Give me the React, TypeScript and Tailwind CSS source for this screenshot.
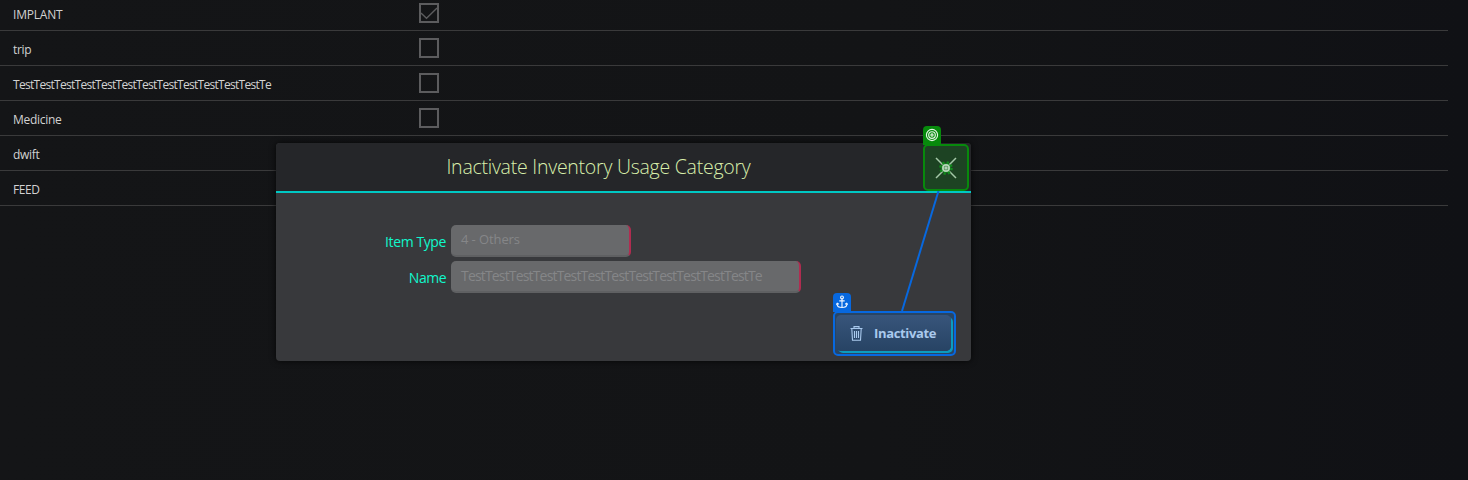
import React from "react";

const rows = [
  { name: "IMPLANT", box: true, checked: true, ls: "tracking-[-0.2px]" },
  { name: "trip", box: true, checked: false, ls: "tracking-[-0.3px]" },
  { name: "TestTestTestTestTestTestTestTestTestTestTestTestTe", box: true, checked: false, ls: "tracking-[-0.71px]" },
  { name: "Medicine", box: true, checked: false, ls: "tracking-[-0.3px]" },
  { name: "dwift", box: false, checked: false, ls: "tracking-[-0.3px]" },
  { name: "FEED", box: false, checked: false, ls: "tracking-[-0.4px]" },
];

function Check({ checked }: { checked: boolean }) {
  return (
    <span className="mt-[-1px] block size-5 border-2 border-[#5c5c5e]">
      {checked && (
        <svg viewBox="0 0 16 16" className="size-4" fill="none" stroke="#5c5c5e" strokeWidth="1.3">
          <path d="M0 8 L5.5 13.3 L16 3" />
        </svg>
      )}
    </span>
  );
}

function Row({ row }: { row: (typeof rows)[number] }) {
  return (
    <div className="flex h-[35px] w-[1448px] shrink-0 items-center border-b border-[#3a3a3b] pl-[13px]">
      <span className={`w-[406px] pt-[4px] text-[12px] leading-[18px] text-[#d2d2d2] ${row.ls}`}>
        <span>{row.name}</span>
      </span>
      {row.box && <Check checked={row.checked} />}
    </div>
  );
}

export default function App() {
  return (
    <div className="relative flex h-[480px] w-full flex-col overflow-hidden bg-[linear-gradient(90deg,#141517,#131416_60%,#101115)] font-['Open_Sans','Noto_Sans',sans-serif]">
      <div className="mt-[-4px] flex flex-col">
        {rows.map((r) => (
          <Row key={r.name} row={r} />
        ))}
      </div>

      <section className="absolute left-[276px] top-[143px] flex h-[218px] w-[695px] flex-col rounded-[4px] bg-[#38393c] shadow-[0_0_6px_rgba(0,0,0,0.75)]">
        <header className="flex h-[50px] justify-center rounded-t-[4px] border-b-2 border-[#00c8c4] bg-[#252629] pr-[50px]">
          <h1 className="whitespace-nowrap text-[19.5px] font-light leading-[48px] tracking-[-0.25px] text-[#d9efab]">Inactivate Inventory Usage Category</h1>
        </header>
        <div className="flex flex-col gap-1 pt-8">
          <label className="flex h-8 items-center gap-[5px]">
            <span className="w-[170px] pt-px text-right text-[14px] tracking-[-0.4px] text-[#10f8cc]">Item Type</span>
            <span className="h-8 w-[180px] rounded-[5px] border-b-2 border-r-2 border-b-[#5f6062] border-r-[#b02c50] bg-[#68696b] pl-[10px] text-[13px] leading-[29px] tracking-[-0.1px] text-[#858688]">4 - Others</span>
          </label>
          <label className="flex h-8 items-center gap-[5px]">
            <span className="w-[170px] pt-px text-right text-[14px] tracking-[-0.5px] text-[#10f8cc]">Name</span>
            <span className="h-8 w-[350px] rounded-[5px] border-b-2 border-r-2 border-b-[#5f6062] border-r-[#b02c50] bg-[#68696b] pl-[10px] text-[14px] leading-[30px] tracking-[-0.83px] text-[#858688]">TestTestTestTestTestTestTestTestTestTestTestTestTe</span>
          </label>
        </div>
      </section>

      <svg className="absolute left-[890px] top-[188px]" width="60" height="126" fill="none">
        <path d="M48.5 3 L12 123" stroke="#0768df" strokeWidth="2" />
      </svg>

      <div className="absolute left-[923px] top-[144px] flex h-[47px] w-[46px] items-center justify-center rounded-[5px] border-2 border-[#078a0c] bg-[#1d4323]">
        <svg width="22" height="22" viewBox="0 0 22 22" fill="none">
          <path d="M1 1 L21 21 M21 1 L1 21" stroke="#a5c8a8" strokeWidth="1.5" />
          <circle cx="11" cy="11" r="5.5" stroke="#118b1c" strokeWidth="2.6" strokeDasharray="2.2 2.12" />
          <circle cx="11" cy="11" r="4.8" fill="#168720" />
          <circle cx="11" cy="11" r="3.1" fill="#3c8445" stroke="#b5d5b8" strokeWidth="1.8" />
          <path d="M11 9.2v3.6M9.2 11h3.6" stroke="#d8ead9" />
        </svg>
      </div>
      <div className="absolute left-[923px] top-[126px] flex h-[19px] w-[18px] items-start justify-center rounded-t-[4px] bg-[#078a0c] pt-[2px]">
        <svg width="14" height="14" viewBox="0 0 14 14" fill="none" stroke="#e5f4e5" strokeWidth="1.15">
          <circle cx="7" cy="7" r="5.6" />
          <circle cx="7" cy="7" r="3.3" />
          <circle cx="7" cy="7" r="1.1" />
        </svg>
      </div>

      <div className="absolute left-[833px] top-[311px] h-[45px] w-[123px] rounded-[5px] border-2 border-[#0768df] bg-[#294564] pl-[1px] pt-[2px]">
        <button className="flex h-[36px] w-[115px] items-center rounded-[5px] bg-[linear-gradient(#38557b,#274364)] pl-[14px] shadow-[2px_2px_0_#0b9dbf]">
          <svg width="13" height="15" viewBox="0 0 13 15" fill="none" stroke="#a9c9ed" strokeWidth="1.1">
            <path d="M0.5 2.5h12M4 2.2V.6h5v1.6M1.8 2.8l.7 11.5h8l.7-11.5M4.5 5v7M6.5 5v7M8.5 5v7" />
          </svg>
          <span className="ml-[11px] text-[13px] font-bold leading-[18px] tracking-[-0.35px] text-[#a9c9ed]">Inactivate</span>
        </button>
      </div>
      <div className="absolute left-[833px] top-[293px] flex h-[19px] w-[18px] items-start justify-center rounded-t-[4px] bg-[#0768df] pt-[2px]">
        <svg width="12" height="14" viewBox="0 0 12 14" fill="none" stroke="#eef5ff" strokeWidth="1.15">
          <circle cx="6" cy="2.4" r="1.4" />
          <path d="M6 3.8v8.7M3.3 5.8h5.4M1.2 8.3v1.2c0 2 2.2 3 4.8 3s4.8-1 4.8-3V8.3M.3 9.6l1-1.4 1.6 1M11.7 9.6l-1-1.4-1.6 1" />
        </svg>
      </div>
    </div>
  );
}
